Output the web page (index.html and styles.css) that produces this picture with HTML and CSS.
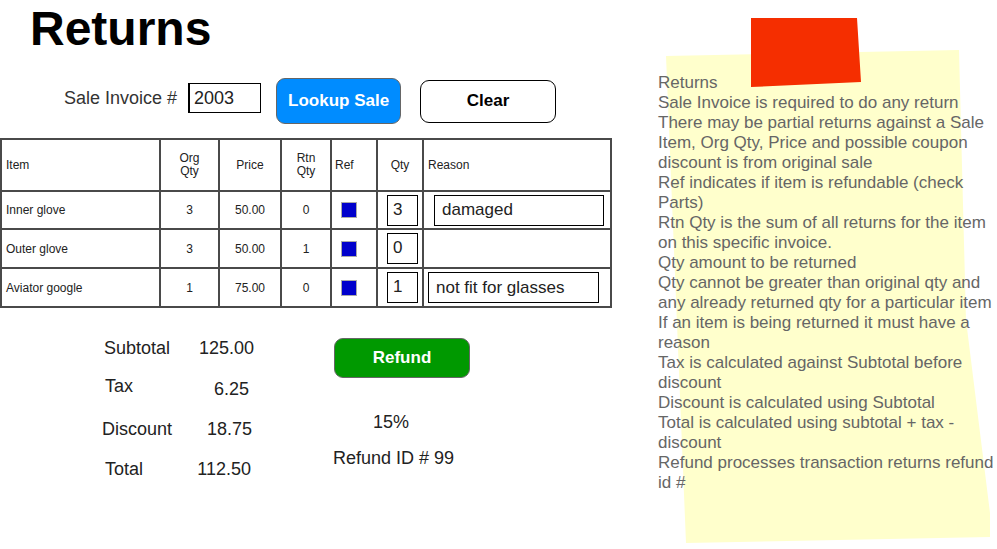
FILE: index.html
```html
<!DOCTYPE html>
<html>
<head>
<meta charset="utf-8">
<link rel="stylesheet" href="styles.css">
</head>
<body>
<div class="page">
  <main class="main">
    <h1 class="title">Returns</h1>
    <div class="lookup-row">
      <span class="label">Sale Invoice #</span>
      <div class="field invoice">2003</div>
      <button class="btn btn-blue">Lookup Sale</button>
      <button class="btn btn-white">Clear</button>
    </div>
    <table class="items">
      <colgroup>
        <col style="width:159px"><col style="width:59px"><col style="width:62px"><col style="width:50px"><col style="width:46px"><col style="width:46px"><col style="width:188px">
      </colgroup>
      <thead>
        <tr class="head">
          <th class="left">Item</th>
          <th>Org<br>Qty</th>
          <th>Price</th>
          <th>Rtn<br>Qty</th>
          <th class="left ref-h">Ref</th>
          <th>Qty</th>
          <th class="left">Reason</th>
        </tr>
      </thead>
      <tbody>
        <tr class="r1">
          <td class="left">Inner glove</td>
          <td>3</td>
          <td>50.00</td>
          <td>0</td>
          <td><span class="chk"></span></td>
          <td><div class="qty">3</div></td>
          <td><div class="reason r-a">damaged</div></td>
        </tr>
        <tr class="r2">
          <td class="left">Outer glove</td>
          <td>3</td>
          <td>50.00</td>
          <td>1</td>
          <td><span class="chk"></span></td>
          <td><div class="qty">0</div></td>
          <td></td>
        </tr>
        <tr class="r3">
          <td class="left">Aviator google</td>
          <td>1</td>
          <td>75.00</td>
          <td>0</td>
          <td><span class="chk"></span></td>
          <td><div class="qty">1</div></td>
          <td><div class="reason r-b">not fit for glasses</div></td>
        </tr>
      </tbody>
    </table>
    <div class="bottom">
      <div class="totals">
        <span class="t-label l-sub">Subtotal</span><span class="t-val v-sub">125.00</span>
        <span class="t-label l-tax">Tax</span><span class="t-val v-tax">6.25</span>
        <span class="t-label l-disc">Discount</span><span class="t-val v-disc">18.75</span>
        <span class="t-label l-tot">Total</span><span class="t-val v-tot">112.50</span>
      </div>
      <div class="refund-col">
        <button class="btn btn-green">Refund</button>
        <div class="pct">15%</div>
        <div class="refund-id">Refund ID # 99</div>
      </div>
    </div>
  </main>
  <aside class="note">
    <svg class="note-bg" width="340" height="549" viewBox="650 0 340 549">
      <polygon points="666,56 959,50 966,320 993,537 686,543" fill="#ffffcc"/>
      <polygon points="751,18 857,18 861,82 751,87" fill="#f52e00"/>
    </svg>
    <div class="note-text">Returns<br>Sale Invoice is required to do any return<br>There may be partial returns against a Sale<br>Item, Org Qty, Price and possible coupon<br>discount is from original sale<br>Ref indicates if item is refundable (check<br>Parts)<br>Rtn Qty is the sum of all returns for the item<br>on this specific invoice.<br>Qty amount to be returned<br>Qty cannot be greater than original qty and<br>any already returned qty for a particular item<br>If an item is being returned it must have a<br>reason<br>Tax is calculated against Subtotal before<br>discount<br>Discount is calculated using Subtotal<br>Total is calculated using subtotal + tax -<br>discount<br>Refund processes transaction returns refund<br>id #</div>
  </aside>
</div>
</body>
</html>
```

FILE: styles.css
```css
* { box-sizing: border-box; }
html, body { margin: 0; padding: 0; background: #fff; }
body {
  font-family: "Liberation Sans", Arial, sans-serif;
  color: #222;
  width: 997px;
  height: 549px;
  overflow: hidden;
}
.page { position: relative; width: 997px; height: 549px; display: flow-root; }
.main { width: 640px; }
.title {
  margin: 5px 0 0 30px;
  font-size: 48px;
  line-height: 48px;
  font-weight: bold;
  color: #000;
}
.lookup-row {
  display: flex;
  align-items: center;
  height: 46px;
  margin-top: 25px;
  padding-left: 64px;
}
.label { font-size: 18px; color: #333; margin-right: 11px; margin-bottom: 6px; }
.field {
  border: 1px solid #000;
  font-size: 18px;
  color: #222;
}
.invoice {
  width: 73px;
  height: 30px;
  padding: 2px 0 0 4px;
  line-height: 24px;
  border-left-width: 2px;
  margin-right: 15px;
  margin-bottom: 6px;
}
.btn {
  font-family: "Liberation Sans", Arial, sans-serif;
  font-weight: bold;
  font-size: 17px;
  border-radius: 9px;
  padding: 0;
  cursor: pointer;
}
.btn-blue {
  width: 125px;
  height: 46px;
  background: #008cff;
  color: #fff;
  border: 1px solid #666;
  margin-right: 19px;
}
.btn-white {
  width: 136px;
  height: 43px;
  background: #fff;
  color: #000;
  border: 1px solid #000;
}
.items {
  margin-top: 14px;
  border-collapse: collapse;
  table-layout: fixed;
  width: 610px;
  border: 2px solid #333;
  font-size: 12px;
  color: #222;
}
.items th, .items td {
  border: 2px solid #4a4a4a;
  text-align: center;
  vertical-align: middle;
  font-weight: normal;
  padding: 0;
}
.items .left { text-align: left; padding-left: 4px; }
.items .ref-h { padding-left: 3px; }
.head { height: 52px; }
.head th { line-height: 13px; }
.r1 { height: 38px; }
.r2 { height: 39px; }
.r3 { height: 39px; }
.chk {
  display: inline-block;
  width: 16px;
  height: 16px;
  margin-right: 10px;
  background: #0000cc;
  border: 1px solid #aaa;
  vertical-align: middle;
}
.qty {
  width: 31px;
  height: 31px;
  margin-left: 9px;
  border: 1px solid #000;
  font-size: 17px;
  text-align: left;
  padding-left: 5px;
  line-height: 27px;
}
.reason {
  height: 31px;
  border: 1px solid #000;
  font-size: 17px;
  text-align: left;
  padding-left: 7px;
  line-height: 27px;
}
.r-a { width: 170px; margin-left: 10px; }
.r-b { width: 171px; margin-left: 4px; line-height: 29px; }
.bottom {
  display: flex;
  margin-top: 30px;
}
.totals {
  display: grid;
  grid-template-columns: 94px 58px;
  grid-auto-rows: 40px;
  align-items: center;
  margin-left: 102px;
  margin-top: -10px;
  width: 152px;
  font-size: 18px;
  color: #222;
}
.t-val { text-align: right; }
.l-sub { padding-left: 2px; }
.l-tax { padding-left: 3px; margin-top: -4px; }
.l-disc { margin-top: 2px; }
.l-tot { padding-left: 3px; margin-top: 2px; }
.v-sub { margin-top: 0; }
.v-tax { padding-right: 5px; margin-top: 3px; }
.v-disc { padding-right: 2px; margin-top: 2px; }
.v-tot { padding-right: 3px; margin-top: 2px; }
.refund-col {
  margin-left: 80px;
  width: 140px;
  display: flex;
  flex-direction: column;
  align-items: flex-start;
  font-size: 18px;
  color: #222;
}
.btn-green {
  width: 136px;
  height: 40px;
  background: #009900;
  color: #fff;
  border: 1px solid #666;
}
.pct { margin-top: 33px; margin-left: 39px; line-height: 22px; }
.refund-id { margin-top: 14px; margin-left: -1px; line-height: 22px; }
.note {
  position: absolute;
  left: 650px;
  top: 0;
  width: 347px;
  height: 549px;
}
.note-bg { position: absolute; left: 0; top: 0; }
.note-text {
  position: absolute;
  left: 8px;
  top: 73px;
  font-size: 17px;
  line-height: 20px;
  color: #666;
  white-space: nowrap;
}
```
